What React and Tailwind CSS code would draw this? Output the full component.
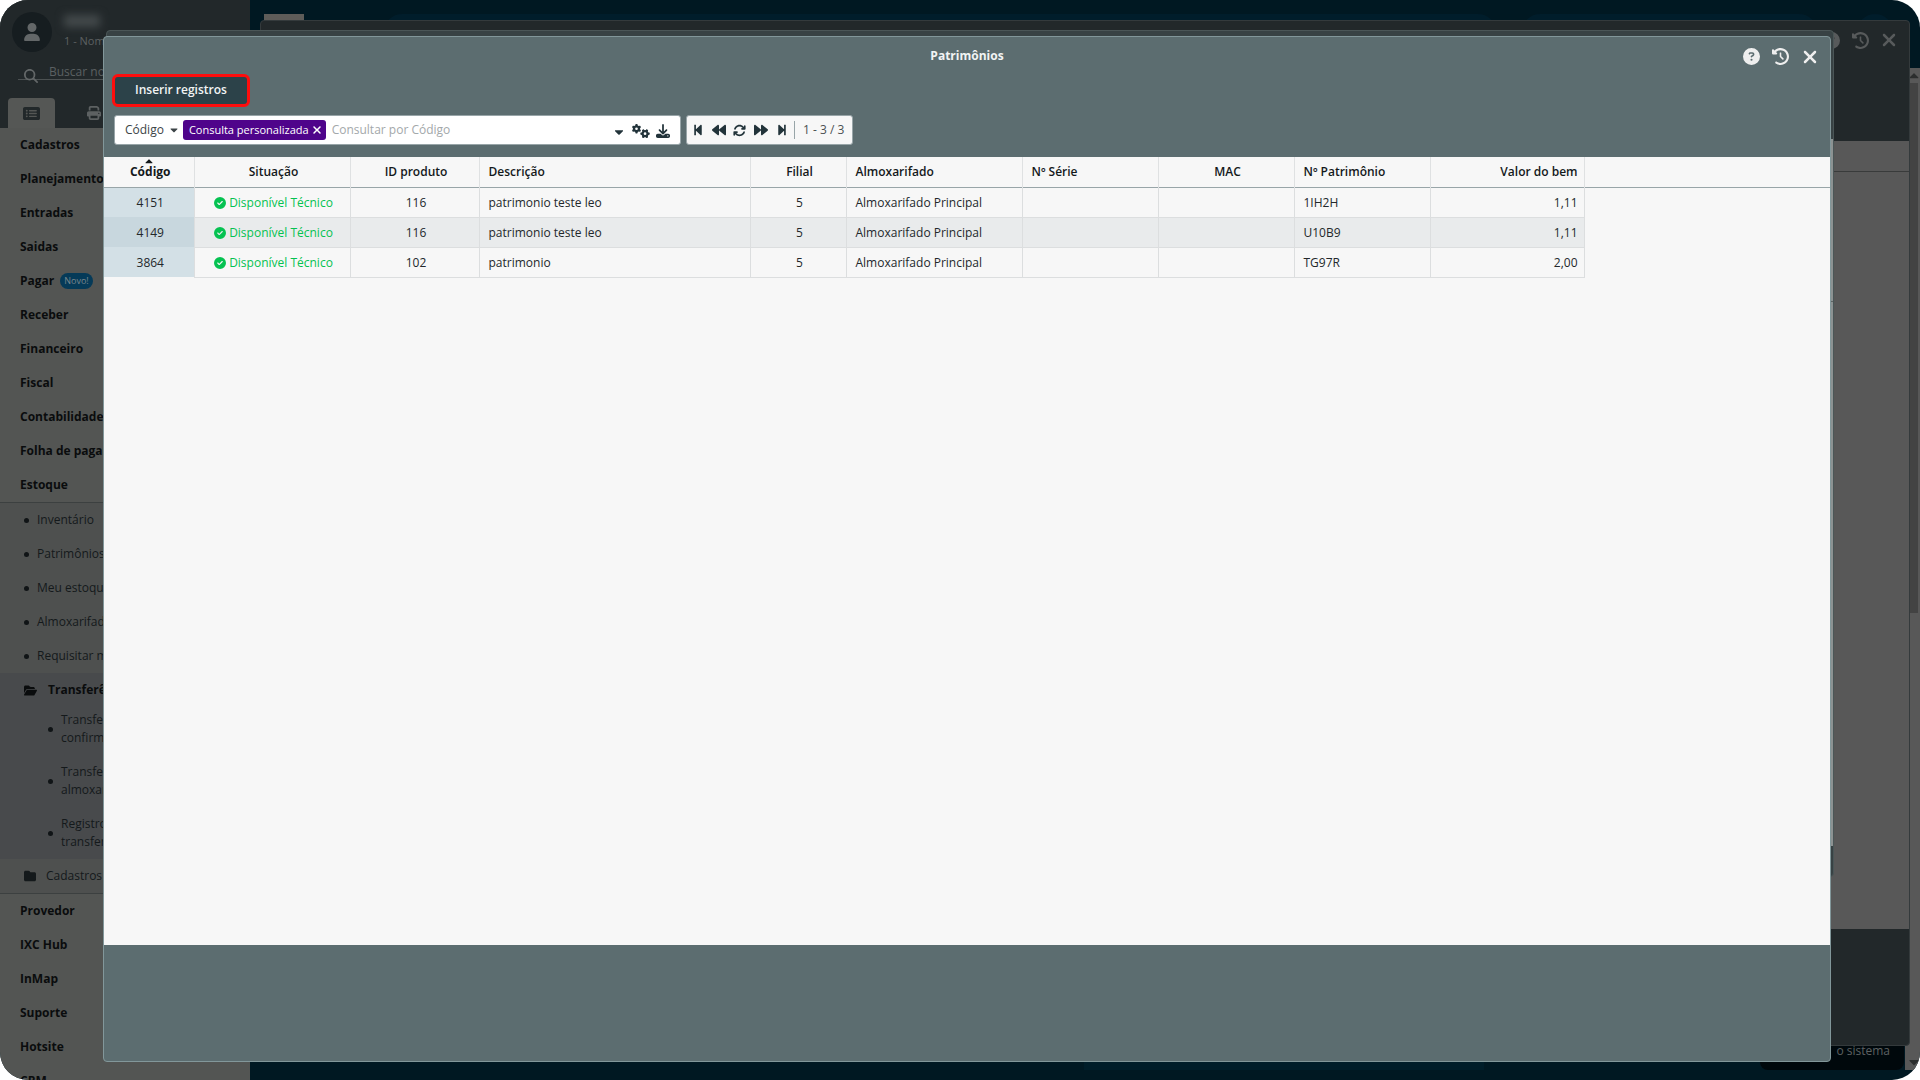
import React from "react";
import { FaStepBackward, FaBackward, FaForward, FaStepForward, FaCaretDown, FaCaretUp } from "react-icons/fa";
import {
  FaRectangleList, FaFolder, FaFolderOpen, FaClockRotateLeft, FaXmark, FaCircleQuestion, FaCircleCheck,
  FaGears, FaDownload, FaArrowsRotate, FaUser, FaPrint, FaMagnifyingGlass,
} from "react-icons/fa6";

const before = ["Cadastros", "Planejamento", "Entradas", "Saidas", "Pagar", "Receber", "Financeiro", "Fiscal", "Contabilidade", "Folha de pagamento", "Estoque"];
const stock = ["Inventário", "Patrimônios", "Meu estoque", "Almoxarifado", "Requisitar material"];
const transfers = [["Transferências a", "confirmar"], ["Transferência de", "almoxarifado"], ["Registro de", "transferências"]];
const after = ["Provedor", "IXC Hub", "InMap", "Suporte", "Hotsite", "CRM"];

const columns = [
  { label: "Código", col: "w-[90px]", align: "text-center" },
  { label: "Situação", col: "w-[156px]", align: "text-center" },
  { label: "ID produto", col: "w-[129px]", align: "text-center" },
  { label: "Descrição", col: "w-[271px]", align: "text-left" },
  { label: "Filial", col: "w-[96px]", align: "text-center" },
  { label: "Almoxarifado", col: "w-[176px]", align: "text-left" },
  { label: "Nº Série", col: "w-[136px]", align: "text-left" },
  { label: "MAC", col: "w-[136px]", align: "text-center" },
  { label: "Nº Patrimônio", col: "w-[136px]", align: "text-left" },
  { label: "Valor do bem", col: "w-[154px]", align: "text-right" },
];
const rows = [
  ["4151", "Disponível Técnico", "116", "patrimonio teste leo", "5", "Almoxarifado Principal", "", "", "1IH2H", "1,11"],
  ["4149", "Disponível Técnico", "116", "patrimonio teste leo", "5", "Almoxarifado Principal", "", "", "U10B9", "1,11"],
  ["3864", "Disponível Técnico", "102", "patrimonio", "5", "Almoxarifado Principal", "", "", "TG97R", "2,00"],
];

function MenuItem({ label }) {
  return (
    <li className="flex h-[34px] items-center gap-1.5 pl-5">
      <a href="#" className="font-bold whitespace-nowrap text-[#0a0c0d]">{label}</a>
      {label === "Pagar" && <span className="flex h-4 items-center rounded-full bg-[#053a58] px-1 text-[9px] text-[#78868c]">Novo!</span>}
    </li>
  );
}

function Sidebar() {
  return (
    <aside className="flex h-full w-[250px] shrink-0 flex-col overflow-hidden bg-[#535553] text-xs text-[#14191b]">
      <header className="h-32 shrink-0 bg-[#22282a]">
        <div className="flex h-16 items-center gap-3 pl-3">
          <span className="grid size-10 place-items-center rounded-full bg-[#161d20] text-lg text-[#636768]"><FaUser /></span>
          <div className="flex flex-col gap-1.5 text-[11px] leading-4 text-[#5d6162]">
            <span className="h-3 w-9 bg-[#444a4c] blur-xs" />
            <span>1 - Nome da empresa</span>
          </div>
        </div>
        <label className="mr-5 ml-[18px] flex h-4 items-center gap-[11px] border-b border-[#4c5152] pl-1.5 text-[#636768]">
          <FaMagnifyingGlass className="mt-2 size-3.5 shrink-0" />
          <input aria-label="Buscar no menu" placeholder="Buscar no menu" className="w-full bg-transparent outline-none placeholder:text-[#5b6062]" />
        </label>
        <div className="flex h-12 items-end">
          <button aria-label="Menu" className="ml-2 grid h-[30px] w-[47px] place-items-center rounded-t bg-[#555755] text-[17px] text-[#22282a]"><FaRectangleList /></button>
          <button aria-label="Imprimir" className="ml-8 grid h-[30px] place-items-center text-sm text-[#5d6162]"><FaPrint /></button>
        </div>
      </header>
      <nav className="shrink-0">
        <ul>{before.map((t) => <MenuItem key={t} label={t} />)}</ul>
        <ul className="border-y border-[#3c4040] bg-[#4e504f]">
          {stock.map((t) => (
            <li key={t} className="flex h-[34px] items-center gap-2 pl-6"><span className="size-[5px] rounded-full bg-[#101416]" /><a href="#" className="whitespace-nowrap">{t}</a></li>
          ))}
          <li className="bg-[#484a4c]">
            <a href="#" className="flex h-[30px] items-center gap-[11px] pt-1 pl-6 font-bold text-[#0a0c0d]"><FaFolderOpen className="size-[13px]" /> Transferências</a>
            <ul>
              {transfers.map(([a, b]) => (
                <li key={a} className="flex h-[52px] items-center gap-2 pl-12 leading-[18px]">
                  <span className="size-[5px] shrink-0 rounded-full bg-[#101416]" /><a href="#">{a}<br />{b}</a>
                </li>
              ))}
            </ul>
          </li>
          <li><a href="#" className="flex h-[34px] items-center gap-2.5 pl-6"><FaFolder /> Cadastros</a></li>
        </ul>
        <ul>{after.map((t) => <MenuItem key={t} label={t} />)}</ul>
      </nav>
    </aside>
  );
}

function Desktop() {
  return (
    <div className="flex min-w-0 grow flex-col">
      <header className="flex h-[68px] shrink-0 items-start pt-3.5 pr-[27px] pl-3.5">
        <div className="h-9 w-10 bg-[#5e5c59]" />
        <div className="ml-20 h-9 grow rounded-full bg-[#001d2b]" />
        <div className="ml-[26px] h-9 w-[295px] rounded-full bg-[#001d2b]" />
        <div className="ml-10 size-9 rounded-full bg-[#001d2b]" />
      </header>
      <div className="relative flex grow">
        <div className="mx-auto h-14 w-[400px] self-end bg-[#001d29] lg:ml-[834px]" />
        <div className="flex w-[15px] flex-col items-end bg-[#585858] text-[#2c2e2e]">
          <FaCaretUp className="h-[15px] w-3 shrink-0" />
          <div className="mr-0.5 h-[530px] w-full bg-[#434343]" />
          <FaCaretDown className="mt-auto h-4 w-3 shrink-0" />
        </div>
        <div className="absolute right-4 bottom-0 flex h-14 w-36 items-end justify-end rounded-lg bg-[#00080c] pr-3.5 pb-[11px] text-xs text-[#5d6162]">o sistema</div>
      </div>
      <footer className="h-2.5 shrink-0" />
    </div>
  );
}

function WindowButtons({ tone }) {
  return (
    <div className={`flex items-center justify-end gap-[9px] pr-2.5 ${tone}`}>
      <button aria-label="Ajuda" className="grid size-5 place-items-center"><FaCircleQuestion className="size-[17px]" /></button>
      <button aria-label="Histórico" className="grid size-5 place-items-center"><FaClockRotateLeft className="size-[17px]" /></button>
      <button aria-label="Fechar" className="grid size-5 place-items-center"><FaXmark className="size-5" /></button>
    </div>
  );
}

function ListWindow() {
  return (
    <div className="absolute top-5 right-2.5 bottom-[34px] left-[260px] flex flex-col rounded border border-[#343a3c] bg-[#22282a]">
      <header className="h-[120px] shrink-0 pt-[9px]"><WindowButtons tone="text-[#575a5b]" /></header>
      <div className="grow bg-[#585858]"><div className="h-[31px] border-b border-[#393b3b]" /></div>
      <footer className="h-[116px] shrink-0" />
    </div>
  );
}

function FormWindow() {
  return (
    <div className="absolute top-[30px] right-[86px] bottom-[203px] left-[106px] flex flex-col rounded border border-[#4b5657] bg-[#384244]">
      <header className="h-[108px] shrink-0" />
      <div className="grow bg-[#8c9292]"><div className="h-[163px] border-b border-[#5d6464]" /></div>
      <footer className="h-[30px] shrink-0" />
    </div>
  );
}

function Cell({ index, value }) {
  if (index !== 1) return value;
  return <span className="flex items-center justify-center gap-[3px] text-[#05c251]"><FaCircleCheck className="size-3" />{value}</span>;
}

function RecordsTable() {
  return (
    <table className="w-full table-fixed border-collapse text-xs text-[#23282b]">
      <colgroup>{columns.map((c) => <col key={c.label} className={c.col} />)}<col /></colgroup>
      <thead>
        <tr className="h-[30px] border-b border-[#98a5a8]">
          {columns.map((c, i) => (
            <th key={c.label} className={`relative border-r border-[#dfe1e2] pr-1.5 pl-[9px] text-[#14191b] ${c.align} ${i === 0 ? "font-bold" : "font-semibold"}`}>
              {i === 0 && <FaCaretUp className="absolute -top-0.5 left-1/2 size-3 -translate-x-1/2" />}
              {c.label}
            </th>
          ))}
          <th />
        </tr>
      </thead>
      <tbody>
        {rows.map((r) => (
          <tr key={r[0]} className="group h-[30px]">
            {r.map((v, i) => (
              <td key={i} className={`border-r border-b border-[#dcdedf] pt-0.5 pr-1.5 pl-[9px] group-even:bg-[#e9ebec] first:border-b-0 first:bg-[#d3e0e6] group-even:first:bg-[#c8d7de] ${columns[i].align}`}><Cell index={i} value={v} /></td>
            ))}
            <td />
          </tr>
        ))}
      </tbody>
    </table>
  );
}

const pager = [
  ["Primeira", FaStepBackward, "size-3"],
  ["Anterior", FaBackward, "size-3.5"],
  ["Atualizar", FaArrowsRotate, "size-[13px]"],
  ["Próxima", FaForward, "size-3.5"],
  ["Última", FaStepForward, "size-3"],
];

function RecordsWindow() {
  return (
    <div role="dialog" aria-label="Patrimônios" className="absolute top-9 right-[89px] bottom-[18px] left-[103px] flex flex-col overflow-hidden rounded border border-[#82979a] bg-[#5c6d70]">
      <header className="grid h-[37px] shrink-0 grid-cols-3 items-center">
        <h1 className="col-start-2 text-center text-xs font-bold text-[#f2f4f4]">Patrimônios</h1>
        <WindowButtons tone="text-[#eeeeee] pt-0.5" />
      </header>
      <div className="flex h-[41px] shrink-0 items-start pl-2">
        <button className="h-[33px] rounded-md border-3 border-[#ff0d0d] bg-[#2c4249] px-5 pb-0.5 text-xs font-semibold text-[#f2f4f4]">Inserir registros</button>
      </div>
      <div className="flex h-[42px] shrink-0 items-start gap-[5px] pl-2.5 text-xs text-[#3c4447]">
        <div className="flex h-[30px] w-[567px] items-center rounded-[3px] border border-[#98a5a8] bg-white pl-2.5">
          <button className="flex items-center gap-1">Código <FaCaretDown className="size-3" /></button>
          <span className="ml-[3px] flex h-5 items-center gap-0.5 rounded-[3px] bg-[#4f048b] pr-[3px] pl-1.5 text-[11px] text-white">Consulta personalizada
            <button aria-label="Remover"><FaXmark className="size-3" /></button></span>
          <input aria-label="Consultar" placeholder="Consultar por Código" className="ml-1.5 min-w-0 grow outline-none placeholder:text-[#a3a8aa]" />
          <div className="flex items-center gap-1.5 pr-2.5 text-[#22333a]">
            <button aria-label="Opções"><FaCaretDown className="mt-1 size-3.5" /></button>
            <button aria-label="Configurar"><FaGears className="mt-0.5 size-[18px]" /></button>
            <button aria-label="Exportar"><FaDownload className="mt-0.5 size-3.5" /></button>
          </div>
        </div>
        <div className="flex h-[30px] items-center rounded-[3px] border border-[#98a5a8] bg-[#f7f7f7] pr-2 text-[#22333a]">
          {pager.map(([label, Icon, size]) => (
            <button key={label} aria-label={label} className="grid size-[21px] place-items-center"><Icon className={size} /></button>
          ))}
          <span className="ml-0.5 border-l border-[#98a5a8] pl-2 leading-[18px] text-[#4a5052]">1 - 3 / 3</span>
        </div>
      </div>
      <main className="grow bg-[#f7f7f7]"><RecordsTable /></main>
      <footer className="h-[116px] shrink-0" />
    </div>
  );
}

export default function App() {
  return (
    <div className="h-screen bg-white font-['Open_Sans',sans-serif]">
      <div className="relative flex h-full overflow-hidden rounded-[28px] bg-[#001822]">
        <Sidebar />
        <Desktop />
        <ListWindow />
        <FormWindow />
        <RecordsWindow />
      </div>
    </div>
  );
}
